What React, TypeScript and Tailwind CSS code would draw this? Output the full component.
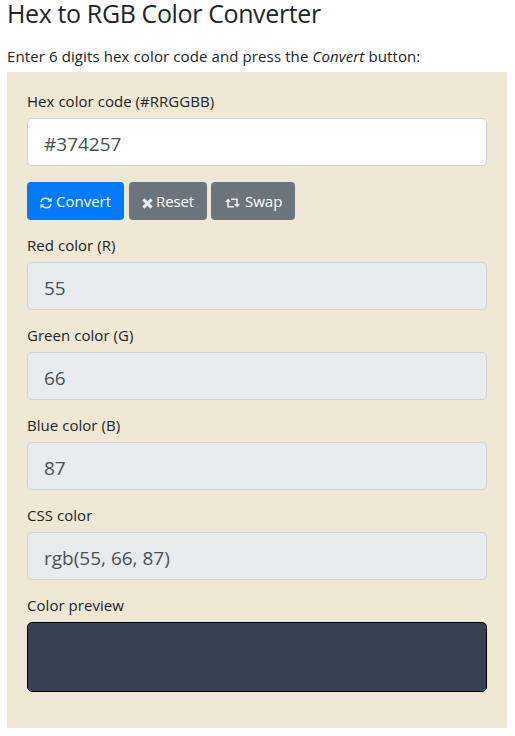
import type { ReactNode } from "react";

const fields = [
  { label: "Red color (R)", value: "55" },
  { label: "Green color (G)", value: "66" },
  { label: "Blue color (B)", value: "87" },
  { label: "CSS color", value: "rgb(55, 66, 87)" },
];

function Label({ children }: { children: ReactNode }) {
  return <div className="mb-1 h-6 leading-[22px] whitespace-nowrap">{children}</div>;
}

function Field({ label, value, readOnly }: { label: string; value: string; readOnly?: boolean }) {
  return (
    <div>
      <Label>{label}</Label>
      <div
        className={`flex h-12 items-center rounded-[5px] border border-[#ced4da] px-4 pt-1 text-[19px] tracking-normal text-[#495057] ${
          readOnly ? "bg-[#e9ecef]" : "bg-white"
        }`}
      >
        {value}
      </div>
    </div>
  );
}

function RefreshIcon() {
  return (
    <svg className="mt-1 h-3 w-3 opacity-85" viewBox="0 0 12 12" fill="none" stroke="currentColor" strokeWidth="1.6">
      <path d="M1 5.2C1.4 2.8 3.3 1.3 5.8 1.3C7.5 1.3 8.8 2 9.8 3.3M11 6.8C10.6 9.2 8.7 10.7 6.2 10.7C4.5 10.7 3.2 10 2.2 8.7" />
      <path d="M11.6.6V4.7H7.5zM.4 11.4V7.3H4.5z" fill="currentColor" stroke="none" />
    </svg>
  );
}

function CrossIcon() {
  return (
    <svg className="mt-1 h-[11px] w-[11px] opacity-85" viewBox="0 0 11 11" stroke="currentColor" strokeWidth="3.2">
      <path d="M1.4 1.4L9.6 9.6M9.6 1.4L1.4 9.6" />
    </svg>
  );
}

function SwapIcon() {
  return (
    <svg className="mt-1 h-[10px] w-[15px] opacity-85" viewBox="0 0 15 10" fill="none" stroke="currentColor" strokeWidth="1.6">
      <path d="M3 3V8.8H9M6 1.2H12V7" />
      <path d="M0 4.1L3 .4L6 4.1zM9 5.9L12 9.6L15 5.9z" fill="currentColor" stroke="none" />
    </svg>
  );
}

export default function App() {
  return (
    <main className="h-[736px] w-[515px] bg-white pl-[7px] font-['Open_Sans','Noto_Sans',sans-serif] text-[15px] tracking-[0.04px] text-[#212529]">
      <h1 className="h-[45px] text-[25px] leading-[27px] tracking-[-0.38px] whitespace-nowrap">
        Hex to RGB Color Converter
      </h1>
      <p className="h-[27px] leading-[22px] tracking-[0.11px] whitespace-nowrap">
        Enter 6 digits hex color code and press the <em>Convert</em> button:
      </p>
      <section className="h-[656px] w-[500px] bg-[#eee8d5] px-5 pt-[18px]">
        <Field label="Hex color code (#RRGGBB)" value="#374257" />
        <div className="mt-4 mb-3.5 flex h-[38px] tracking-normal text-white">
          <button className="mr-[5px] flex w-[97px] items-center gap-1 rounded bg-[#007bff] pl-[13px]">
            <RefreshIcon />
            <span>Convert</span>
          </button>
          <button className="mr-1 flex w-[78px] items-center gap-[3px] rounded bg-[#6c757d] pl-[13px] tracking-[-0.1px]">
            <CrossIcon />
            <span>Reset</span>
          </button>
          <button className="flex w-[84px] items-center gap-[5px] rounded bg-[#6c757d] pl-[14px]">
            <SwapIcon />
            <span>Swap</span>
          </button>
        </div>
        <div className="flex flex-col gap-3.5">
          {fields.map((f) => (
            <Field key={f.label} label={f.label} value={f.value} readOnly />
          ))}
          <div>
            <Label>Color preview</Label>
            <div className="h-[70px] rounded-[5px] border border-black bg-[#374257]" />
          </div>
        </div>
      </section>
    </main>
  );
}
